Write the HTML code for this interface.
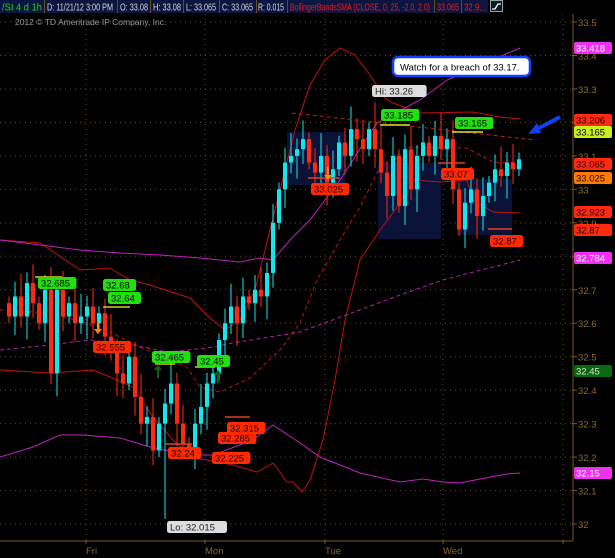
<!DOCTYPE html>
<html><head><meta charset="utf-8"><style>
html,body{margin:0;padding:0;background:#000;width:615px;height:558px;overflow:hidden;font-family:"Liberation Sans",sans-serif}
svg{position:absolute;left:0;top:0}
</style></head><body>
<svg id="c" width="615" height="558" xmlns="http://www.w3.org/2000/svg" font-family="Liberation Sans, sans-serif"></svg>
<script>
var s=document.getElementById('c'),h='';
function Y(p){return 22+(33.5-p)*334.7}
h+='<rect x="0" y="0" width="488" height="13" fill="#0a1540"/>';
[[2,40,'/SI 4 d 1h','#20d020'],[47,66,'D: 11/21/12 3:00 PM','#d8d8d8'],[120,28,'O: 33.08','#d8d8d8'],[153,28,'H: 33.08','#d8d8d8'],[186,30,'L: 33.065','#d8d8d8'],[222,31,'C: 33.065','#d8d8d8'],[258,26,'R: 0.015','#d8d8d8'],[290,140,'BollingerBandsSMA (CLOSE, 0, 25, -2.0, 2.0)','#e02020'],[437,22,'33.065','#e02020'],[464,22,'32.9...','#e02020']].forEach(function(a){h+='<text x="'+a[0]+'" y="10.5" font-size="10.5" fill="'+a[3]+'" textLength="'+a[1]+'" lengthAdjust="spacingAndGlyphs">'+a[2]+'</text>'});
[44,117,150,183,219,256,287,434,461].forEach(function(x){h+='<line x1="'+(x+.5)+'" y1="0" x2="'+(x+.5)+'" y2="13" stroke="#6a4a20"/>'});
h+='<rect x="490.5" y="0.5" width="12" height="11" fill="#101820" stroke="#8aa"/><path d="M492 9 H495 L498 4 H501" stroke="#fff" fill="none" stroke-width="1.3"/>';
for(var p=32;p<=33.51;p+=0.1){var y=Y(p);h+='<line x1="0" y1="'+y+'" x2="572" y2="'+y+'" stroke="#6a4a1a" stroke-dasharray="1,4"/>';h+='<line x1="572" y1="'+y+'" x2="577" y2="'+y+'" stroke="#7a5a20"/><text x="578" y="'+(y+4)+'" font-size="9.5" fill="#8a6a30">'+(Math.round(p*10)/10)+'</text>'}
[86,205,325,443,563].forEach(function(x){h+='<line x1="'+x+'" y1="14" x2="'+x+'" y2="540" stroke="#6a4a1a" stroke-dasharray="1,4"/><line x1="'+x+'" y1="540" x2="'+x+'" y2="544" stroke="#7a5a20"/>'});
h+='<line x1="573" y1="14" x2="573" y2="541" stroke="#7a5a20"/><line x1="0" y1="541" x2="573" y2="541" stroke="#7a5a20"/>';
[['Fri',86],['Mon',205],['Tue',325],['Wed',443]].forEach(function(d){h+='<text x="'+d[1]+'" y="554" font-size="9.5" fill="#8a6a30">'+d[0]+'</text>'});
h+='<text x="15" y="25" font-size="8.5" fill="#999">2012 © TD Ameritrade IP Company, Inc.</text>';
h+='<rect x="287" y="132" width="58" height="53" fill="#0b1238"/><rect x="378" y="163" width="63" height="76" fill="#0b1238"/><rect x="457" y="179" width="55" height="56" fill="#0b1238"/>';
function pl(pts,c,dash,w){h+='<polyline points="'+pts+'" fill="none" stroke="'+c+'" stroke-width="'+(w||1)+'"'+(dash?' stroke-dasharray="4,3"':'')+'/>'}
pl("0,240 40,243 80,270 110,268 130,280 150,285 165,290 190,298 210,318 225,330 240,320 255,290 265,250 280,190 295,130 310,85 325,60 340,48 355,55 370,75 385,98 393,103 420,113 473,112 500,117 520,119","#c01010");
pl("0,370 50,373 93,370 110,377 133,387 153,417 173,440 193,458 207,460 233,465 257,472 273,463 287,482 293,482 302,492 310,480 323,440 335,380 345,320 360,260 380,230 395,210 413,180 440,182 467,180 473,200 493,212 520,213","#c01010");
pl("0,310 50,313 100,327 140,347 187,367 200,387 220,392 250,378 280,350 300,323 317,280 340,240 360,207 380,167 410,147 467,148 493,162 520,163","#c01010",1);
pl("0,240 40,245 80,250 120,253 160,255 200,258 240,262 260,258 273,260 290,240 310,220 340,180 367,138 377,123 420,100 447,80 480,65 520,48","#c020c0");
pl("0,457 33,447 60,435 83,435 120,438 150,447 187,455 213,455 253,440 273,425 300,443 320,457 360,473 400,482 423,479 443,482 460,483 480,479 507,474 520,473","#c020c0");
pl("0,350 50,345 90,340 133,345 167,352 207,348 233,343 300,332 400,295 443,280 520,260","#b020b0",1);
var cl=[32.62,32.68,32.62,32.72,32.66,32.6,32.7, 32.45,32.7,32.62,32.66,32.6,32.62,32.65,32.6,32.63, 32.56,32.52,32.45,32.42,32.5,32.38,32.3, 32.32,32.22,32.3,32.36,32.42,32.3,32.24, 32.22,32.3,32.35,32.42,32.45,32.55, 32.6,32.65,32.6,32.68,32.66,32.7,32.68, 32.75,32.9,33.0,33.08,33.1,33.12, 33.15,33.08,33.05,33.1,33.02,33.06, 33.14,33.1,33.18,33.15,33.12,33.18, 33.12,33.05,32.98,33.1,32.95,33.12, 33.0,33.1,33.14,33.1,33.16,33.12, 33.15,33.0,32.88,32.96,33.0,32.92, 32.98,33.02,33.06,33.04,33.08,33.06,33.09];
var o=32.66;
for(var i=0;i<cl.length;i++){var x=7+6*i,c=cl[i],hi=Math.max(o,c)+0.02+((i*7)%5)*0.012,lo=Math.min(o,c)-0.02-((i*3)%5)*0.012;
if(x>=163&&x<=168)lo=32.015; if(x>=370&&x<=375)hi=33.26;
var col=c>=o?'#10e8f0':'#ff2a10';
h+='<line x1="'+(x+2)+'" y1="'+Y(hi)+'" x2="'+(x+2)+'" y2="'+Y(lo)+'" stroke="'+col+'"/>';
var t=Y(Math.max(o,c)),b=Y(Math.min(o,c));h+='<rect x="'+x+'" y="'+t+'" width="4" height="'+Math.max(1.5,b-t)+'" fill="'+col+'"/>';o=c}
pl("292,113 535,140","#c02010",1.2);
[[35,277,62,'#c8d020'],[100,349,120,'#e04020'],[155,364,175,'#c8d020'],[195,367,215,'#c8d020'],[380,125,410,'#e0e020'],[452,132,483,'#e0e020'],[308,178,340,'#e04020'],[438,163,465,'#e04020'],[488,229,512,'#e04020'],[225,417,250,'#e04020'],[165,444,192,'#e04020'],[103,307,130,'#c8d020']].forEach(function(a){h+='<line x1="'+a[0]+'" y1="'+a[1]+'" x2="'+a[2]+'" y2="'+a[1]+'" stroke="'+a[3]+'" stroke-width="1.5"/>'});
function lab(x,y,t,bg,fg){var w=t.length*5.4+6;h+='<rect x="'+x+'" y="'+y+'" width="'+w+'" height="12" rx="2.5" fill="'+bg+'"/><text x="'+(x+3)+'" y="'+(y+9.5)+'" font-size="9.5" fill="'+fg+'">'+t+'</text>'}
var G='#22e010',R='#ff2a00';
lab(38,277,'32.685',G,'#000');lab(103,279,'32.68',G,'#000');lab(108,292,'32.64',G,'#000');lab(152,351,'32.465',G,'#000');lab(197,355,'32.45',G,'#000');lab(381,109,'33.185',G,'#000');lab(455,117,'33.165',G,'#000');
lab(311,183,'33.025',R,'#200');lab(93,341,'32.555',R,'#200');lab(227,422,'32.315',R,'#200');lab(218,432,'32.285',R,'#200');lab(168,447,'32.24',R,'#200');lab(212,452,'32.225',R,'#200');lab(441,168,'33.07',R,'#200');lab(490,235,'32.87',R,'#200');
lab(372,85,'Hi: 33.26','#ddd','#222');lab(167,521,'Lo: 32.015','#ddd','#222');
h+='<path d="M97 321 v8 h-3 l4 5 l4 -5 h-3 v-8z" fill="#ff8a00"/><path d="M327 167 v8 h-3 l4 5 l4 -5 h-3 v-8z" fill="#ff8a00"/>';
h+='<path d="M157 378 v-8 h-3 l4 -5 l4 5 h-3 v8z" fill="#0a6020"/><path d="M217 383 v-8 h-3 l4 -5 l4 5 h-3 v8z" fill="#0a6020"/>';
h+='<rect x="393" y="57" width="137" height="19" rx="5" fill="#fff" stroke="#1040ff" stroke-width="2.5"/><text x="400" y="70.5" font-size="9.5" fill="#000">Watch for a breach of 33.17.</text>';
h+='<line x1="560" y1="117" x2="537" y2="129" stroke="#1040f0" stroke-width="4"/><path d="M528 134 L537 123 L541 133z" fill="#1040f0"/>';
function rl(y,t,bg,fg){h+='<rect x="574" y="'+y+'" width="38" height="12" rx="2" fill="'+bg+'"/><text x="576" y="'+(y+9.5)+'" font-size="9.5" fill="'+fg+'">'+t+'</text>'}
rl(42,'33.418','#f030f0','#fff');rl(114,'33.206','#ff2a10','#200');rl(126,'33.165','#c8f020','#000');rl(158,'33.065','#ff2a10','#200');rl(172,'33.025','#ff7a00','#200');rl(206,'32.923','#ff2a10','#200');rl(224,'32.87','#ff2a10','#200');rl(252,'32.784','#f030f0','#fff');rl(365,'32.45','#0a6a10','#ddd');rl(467,'32.15','#f030f0','#fff');
s.innerHTML=h;
</script>
</body></html>
